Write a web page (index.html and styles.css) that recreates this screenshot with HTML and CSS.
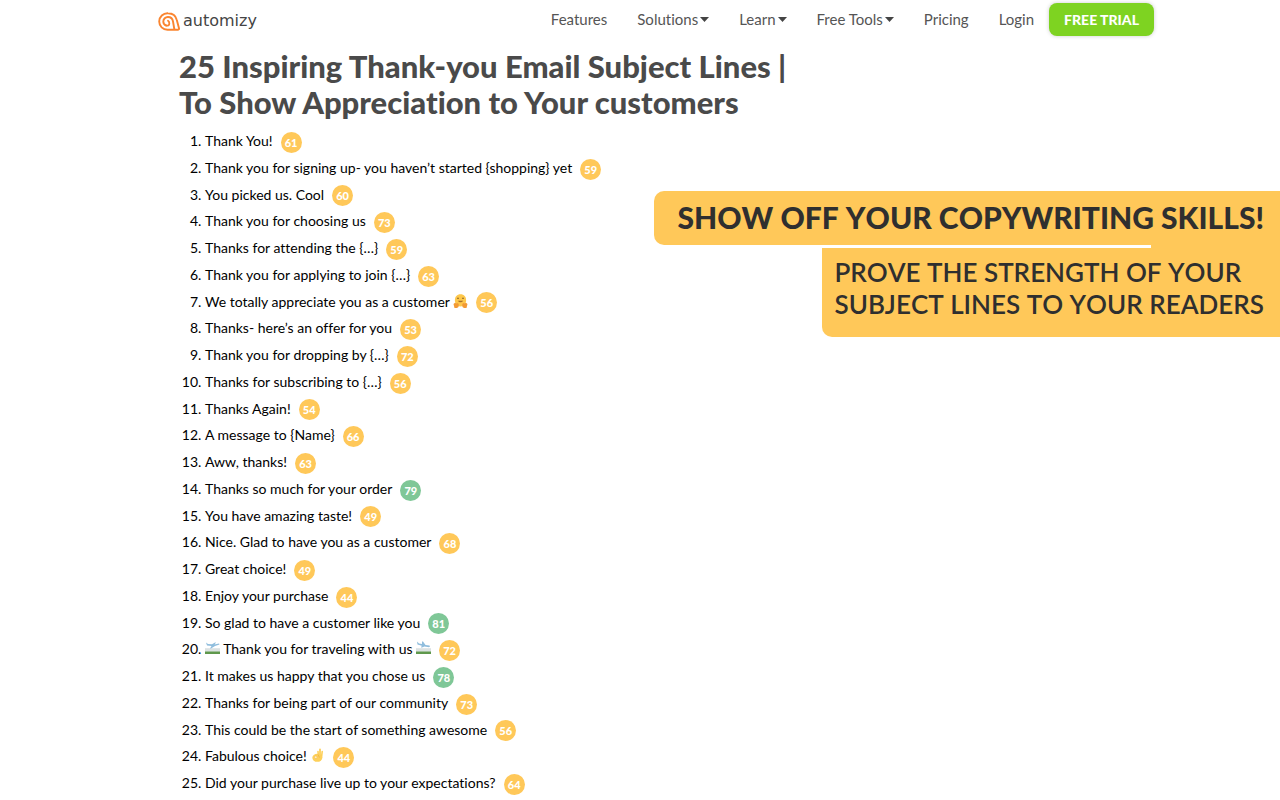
FILE: index.html
```html
<!DOCTYPE html>
<html lang="en">
<head>
<meta charset="utf-8">
<meta name="viewport" content="width=device-width, initial-scale=1">
<title>25 Inspiring Thank-you Email Subject Lines</title>
<link rel="stylesheet" href="styles.css">
</head>
<body>
<svg class="sprite" aria-hidden="true">
  <symbol id="caret" viewBox="0 0 9 5"><path d="M0 0h9L4.500 5z"/></symbol>
  <symbol id="hug" viewBox="0 0 14 14">
    <path d="M7 .3c3.600 0 5.600 2.500 5.600 6S10.500 12.500 7 12.500 1.400 9.800 1.400 6.300 3.400.3 7 .3z" fill="#fdc74b"/>
    <path d="M3.500 4.500q1-1 2 0M8.500 4.500q1-1 2 0" fill="none" stroke="#6d4b21" stroke-width=".8"/>
    <path d="M4.500 6.800h5q-.5 1.500-2.500 1.500T4.500 6.800z" fill="#a8702a"/>
    <path d="M0 10l1.500-1.200L3 9.500l1.500-.5.800 1.500L5 13l-1.500 1H1zM14 10l-1.500-1.200L11 9.500 9.500 9l-.8 1.500L9 13l1.500 1H13z" fill="#f39a35"/>
  </symbol>
  <symbol id="takeoff" viewBox="0 0 15 13">
    <path d="M0 7h15v3H0z" fill="#c3ced0"/><path d="M0 8h15v1H0z" fill="#f2f5f5"/>
    <path d="M0 10h15v2.500H0z" fill="#5f984c"/>
    <path d="M1 1l2 1.500 4 .3L10 1h1L9.500 3l4.500-1 .5 1L10 4.500 6 7H5l1.500-2.500L2 4z" fill="#8fbddd"/>
  </symbol>
  <symbol id="landing" viewBox="0 0 15 13">
    <path d="M0 7h15v3H0z" fill="#c3ced0"/><path d="M0 8h15v1H0z" fill="#f2f5f5"/>
    <path d="M0 10h15v2.500H0z" fill="#5f984c"/>
    <path d="M1 0l2 2 3 .5L6 0h1l2.500 3.500 4 .5.500 1-1 .8L8.500 5 6 6H5l.8-1.700L1.500 3z" fill="#8fbddd"/>
  </symbol>
  <symbol id="okhand" viewBox="0 0 12 14">
    <g fill="none" stroke="#fdd05a" stroke-linecap="round">
      <path d="M7 9L6.500 3.500" stroke-width="1.600"/>
      <path d="M8.500 9V1.500" stroke-width="1.800"/>
      <path d="M10 9.500l.7-6" stroke-width="1.600"/>
    </g>
    <ellipse cx="5.800" cy="9.800" rx="5" ry="4" fill="#fdd05a"/>
    <circle cx="4.300" cy="9.200" r="1.300" fill="#fff3d1" stroke="#f3b544" stroke-width=".6"/>
    <path d="M6.500 6.500L8 9.500" stroke="#eda93a" stroke-width=".6"/>
  </symbol>
</svg>

<header class="topbar">
  <a class="brand" href="#">
    <svg class="brand-mark" viewBox="0 0 22 19" fill="none" stroke="#fa8530" stroke-linecap="round" stroke-linejoin="round" aria-hidden="true">
      <path d="M18.800 8Q17.300 1.200 10 1.200A8.300 8.300 0 0 0 1.200 9.500 8.300 8.300 0 0 0 9.500 17.800H20q1.300-.2 1-1.500z" stroke-width="1.900"/>
      <path d="M8.200 13.500Q5.300 12.500 5.300 9.500A4.600 4.600 0 0 1 10 5Q14.300 5 15 9.500L16.300 17" stroke-width="1.900"/>
      <path d="M10 8.800Q11.300 9.500 11.300 11.500 11.300 13.800 8.500 13.700" stroke-width="1.800"/>
    </svg>
    <span class="brand-name">automizy</span>
  </a>
  <nav class="nav">
    <a href="#">Features</a>
    <a href="#">Solutions<svg class="caret"><use href="#caret"/></svg></a>
    <a href="#">Learn<svg class="caret"><use href="#caret"/></svg></a>
    <a href="#">Free Tools<svg class="caret"><use href="#caret"/></svg></a>
    <a href="#">Pricing</a>
    <a href="#">Login</a>
    <a class="trial" href="#">FREE TRIAL</a>
  </nav>
</header>

<main class="article">
  <h1 class="title">25 Inspiring Thank-you Email Subject Lines |<br>To Show Appreciation to Your customers</h1>
  <div class="columns">
    <ol class="lines">
      <li>Thank You!<span class="score">61</span></li>
      <li>Thank you for signing up- you haven’t started {shopping} yet<span class="score">59</span></li>
      <li>You picked us. Cool<span class="score">60</span></li>
      <li>Thank you for choosing us<span class="score">73</span></li>
      <li>Thanks for attending the {…}<span class="score">59</span></li>
      <li>Thank you for applying to join {…}<span class="score">63</span></li>
      <li>We totally appreciate you as a customer <svg class="emoji"><use href="#hug"/></svg><span class="score">56</span></li>
      <li>Thanks- here’s an offer for you<span class="score">53</span></li>
      <li>Thank you for dropping by {…}<span class="score">72</span></li>
      <li>Thanks for subscribing to {…}<span class="score">56</span></li>
      <li>Thanks Again!<span class="score">54</span></li>
      <li>A message to {Name}<span class="score">66</span></li>
      <li>Aww, thanks!<span class="score">63</span></li>
      <li>Thanks so much for your order<span class="score high">79</span></li>
      <li>You have amazing taste!<span class="score">49</span></li>
      <li>Nice. Glad to have you as a customer<span class="score">68</span></li>
      <li>Great choice!<span class="score">49</span></li>
      <li>Enjoy your purchase<span class="score">44</span></li>
      <li>So glad to have a customer like you<span class="score high">81</span></li>
      <li><svg class="emoji"><use href="#takeoff"/></svg> Thank you for traveling with us <svg class="emoji"><use href="#landing"/></svg><span class="score">72</span></li>
      <li>It makes us happy that you chose us<span class="score high">78</span></li>
      <li>Thanks for being part of our community<span class="score">73</span></li>
      <li>This could be the start of something awesome<span class="score">56</span></li>
      <li>Fabulous choice! <svg class="emoji"><use href="#okhand"/></svg><span class="score">44</span></li>
      <li>Did your purchase live up to your expectations?<span class="score">64</span></li>
    </ol>
    <aside class="promo">
      <p class="promo-head">SHOW OFF YOUR COPYWRITING SKILLS!</p>
      <div class="promo-rule"></div>
      <p class="promo-text">PROVE THE STRENGTH OF YOUR<br>SUBJECT LINES TO YOUR READERS</p>
    </aside>
  </div>
</main>
</body>
</html>
```

FILE: styles.css
```css
* {
  box-sizing: border-box;
}

body {
  display: flex;
  flex-direction: column;
  min-height: 100vh;
  margin: 0;
  background: #fff;
  color: #000;
  font-family: Lato, "Liberation Sans", sans-serif;
  font-variant-ligatures: none;
}

.sprite {
  display: none;
}

.topbar {
  display: flex;
  align-items: center;
  justify-content: space-between;
  padding: 3px 126px 0 158px;
}

.brand {
  display: flex;
  align-items: center;
  gap: 3px;
  padding-top: 3px;
  color: #444;
  text-decoration: none;
}

.brand-mark {
  width: 22px;
  height: 19px;
}

.brand-name {
  font: 16px/20px "DejaVu Sans", sans-serif;
}

.nav {
  display: flex;
  align-items: center;
  gap: 30px;
}

.nav a {
  display: flex;
  align-items: center;
  gap: 2px;
  color: #555;
  font-size: 15px;
  line-height: 33px;
  text-decoration: none;
}

.caret {
  width: 9px;
  height: 5px;
  fill: #444;
}

.nav .trial {
  margin-left: -15px;
  padding: 0 15px;
  border-radius: 8px;
  background: #7ed321;
  box-shadow: 0 0 4px rgba(0, 0, 0, 0.2);
  color: #fff;
  font-size: 14px;
  font-weight: 900;
}

.article {
  display: flex;
  flex: 1;
  flex-direction: column;
}

.title {
  margin: 12px 0 8px 179px;
  color: #4a4a4a;
  font-size: 31px;
  font-weight: 900;
  line-height: 36px;
}

.columns {
  display: flex;
  flex: 1;
  justify-content: space-between;
}

.lines {
  display: flex;
  flex-direction: column;
  justify-content: space-between;
  margin: 0;
  padding: 0 0 4px 205px;
  font-size: 14px;
  line-height: 26px;
  white-space: nowrap;
}

.score {
  display: inline-block;
  width: 21px;
  height: 21px;
  margin-left: 8px;
  border-radius: 50%;
  background: #ffc859;
  color: #fff;
  font-size: 11px;
  font-weight: 900;
  line-height: 21px;
  text-align: center;
  vertical-align: middle;
}

.high {
  background: #7fc797;
}

.emoji {
  width: 15px;
  height: 14px;
  vertical-align: -1px;
}

.promo {
  display: flex;
  flex-direction: column;
  align-items: flex-end;
  align-self: flex-start;
  margin-top: 63px;
  color: #2f2f2f;
  font-kerning: none;
  white-space: nowrap;
}

.promo p {
  margin: 0;
  background: #ffc859;
}

.promo-head {
  padding: 8px 16px 10px 23px;
  border-radius: 10px 0 0 10px;
  font-size: 30px;
  font-weight: 900;
  line-height: 36px;
}

.promo-rule {
  align-self: flex-end;
  width: 129px;
  height: 3px;
  background: #ffc859;
}

.promo-text {
  padding: 8px 16px 17px 12px;
  border-radius: 0 0 0 10px;
  font-size: 26px;
  font-weight: 600;
  line-height: 32px;
}
```
